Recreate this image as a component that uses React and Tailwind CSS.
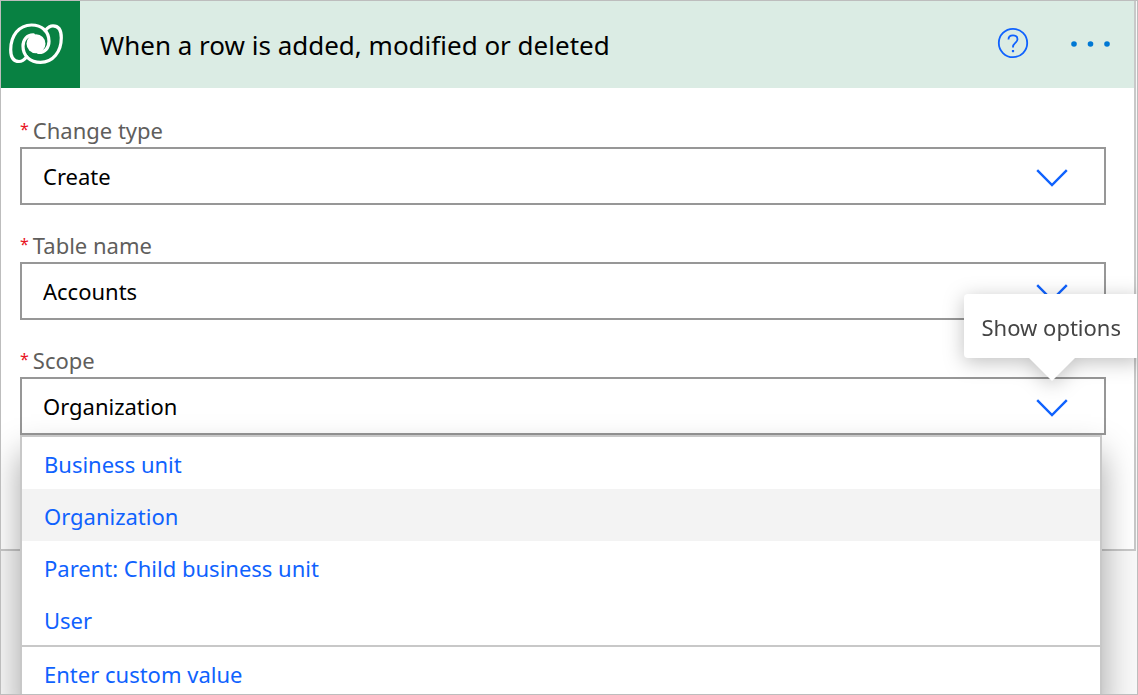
import { useState } from "react";

const SCOPES = ["Business unit", "Organization", "Parent: Child business unit", "User"];

const LOBE =
  "M9.200 -13C12 -16.500 14.500 -17.800 17 -17.800C22.500 -17.800 25.300 -13.500 25.300 -6C25.300 8 17 18.700 4.500 18.700C-6 18.700 -13 12 -13 2.500C-13 -4 -9 -9 -2.500 -8.800";

function Logo() {
  return (
    <svg viewBox="0 0 79 87" className="h-[87px] w-[79px]" fill="none" stroke="#fff" strokeWidth="3.2" strokeLinecap="round" aria-hidden="true">
      <g transform="translate(35 42.700)">
        <path d={LOBE} />
        <path d={LOBE} transform="rotate(180)" />
        <circle r="9.500" fill="#fff" stroke="none" />
      </g>
    </svg>
  );
}

function Chevron() {
  return (
    <svg viewBox="0 0 32 18" className="pointer-events-none absolute top-[22px] right-[38px] h-[18px] w-8" fill="none" stroke="#0f62fe" strokeWidth="2.4" aria-hidden="true">
      <path d="M1.2 1.2L16 16L30.800 1.2" />
    </svg>
  );
}

function Field({ id, label, value, options, onChange, children }) {
  return (
    <div>
      <label htmlFor={id} className="flex gap-1 pb-0.5 text-[22px] leading-[30px] text-[#605e5c]">
        <span className="text-[16px] leading-7 text-[#e81123]">*</span>
        <span>{label}</span>
      </label>
      <div className="relative">
        <select
          id={id}
          value={value}
          onChange={(e) => onChange(e.target.value)}
          className="block h-[58px] w-full appearance-none border-2 border-[#979797] bg-white px-[21px] text-[22px] text-black outline-none"
        >
          {options.map((o) => (
            <option key={o}>{o}</option>
          ))}
        </select>
        <Chevron />
        {children}
      </div>
    </div>
  );
}

export default function App() {
  const [change, setChange] = useState("Create");
  const [table, setTable] = useState("Accounts");
  const [scope, setScope] = useState("Organization");

  return (
    <main className="min-h-screen overflow-hidden border border-[#bdbdbd] bg-[#f8f8f8] font-['Noto_Sans','Open_Sans',sans-serif]">
      <section className="mr-px border-r-2 border-b-2 border-[#c8c8c8] bg-white pb-[114px]">
        <header className="flex h-[87px] items-center bg-[#dbece4] pr-[21px]">
          <div className="bg-[#088142]">
            <Logo />
          </div>
          <h1 className="flex-1 pl-5 text-[26px] leading-9 text-black">When a row is added, modified or deleted</h1>
          <button type="button" aria-label="Help" className="mr-[38px] pb-1">
            <svg viewBox="0 0 32 32" className="size-8" fill="none" stroke="#0f62fe" strokeWidth="1.8" aria-hidden="true">
              <circle cx="16" cy="16" r="14.200" />
              <path d="M11.500 12.500C11.500 9.800 13.300 8.300 16 8.300C18.700 8.300 20.500 9.800 20.500 12.200C20.500 15.800 16 16 16 19.800V20.500" />
              <path d="M16 23V25.200" strokeWidth="2.2" />
            </svg>
          </button>
          <button type="button" aria-label="More options" className="pb-0.5">
            <svg viewBox="0 0 46 8" className="h-2 w-[46px]" fill="#0078d4" aria-hidden="true">
              <circle cx="7" cy="4" r="2.800" />
              <circle cx="23.500" cy="4" r="2.800" />
              <circle cx="40" cy="4" r="2.800" />
            </svg>
          </button>
        </header>
        <div className="flex flex-col gap-[25px] pt-[27px] pr-7 pl-[19px]">
          <Field id="change" label="Change type" value={change} onChange={setChange} options={["Create", "Modify", "Delete"]} />
          <Field id="table" label="Table name" value={table} onChange={setTable} options={["Accounts", "Contacts"]} />
          <Field id="scope" label="Scope" value={scope} onChange={setScope} options={SCOPES}>
            <div role="tooltip" className="absolute -right-9 bottom-[77px] flex h-16 items-center rounded-[4px] bg-white pt-0.5 pr-[21px] pl-[18px] text-[22px] whitespace-nowrap text-[#444] drop-shadow-[0_4px_10px_rgba(0,0,0,0.25)]">
              Show options
              <svg viewBox="0 0 46 23" className="absolute top-full right-[67px] h-[23px] w-[46px]" fill="#fff" aria-hidden="true">
                <path d="M0 0H46L23 23Z" />
              </svg>
            </div>
            <div className="absolute top-full right-1 left-0 border-2 border-[#c8c8c8] bg-white text-[22px] text-[#0f62fe] shadow-[0_18px_32px_rgba(0,0,0,0.35)]">
              <ul>
                {SCOPES.map((o) => (
                  <li key={o}>
                    <button
                      type="button"
                      onClick={() => setScope(o)}
                      className={o === scope ? "block h-[52px] w-full bg-[#f3f3f3] px-[22px] pt-0.5 text-left" : "block h-[52px] w-full px-[22px] pt-0.5 text-left"}
                    >
                      {o}
                    </button>
                  </li>
                ))}
              </ul>
              <button type="button" className="block h-14 w-full border-t-2 border-[#c8c8c8] px-[22px] text-left">
                Enter custom value
              </button>
            </div>
          </Field>
        </div>
      </section>
    </main>
  );
}
